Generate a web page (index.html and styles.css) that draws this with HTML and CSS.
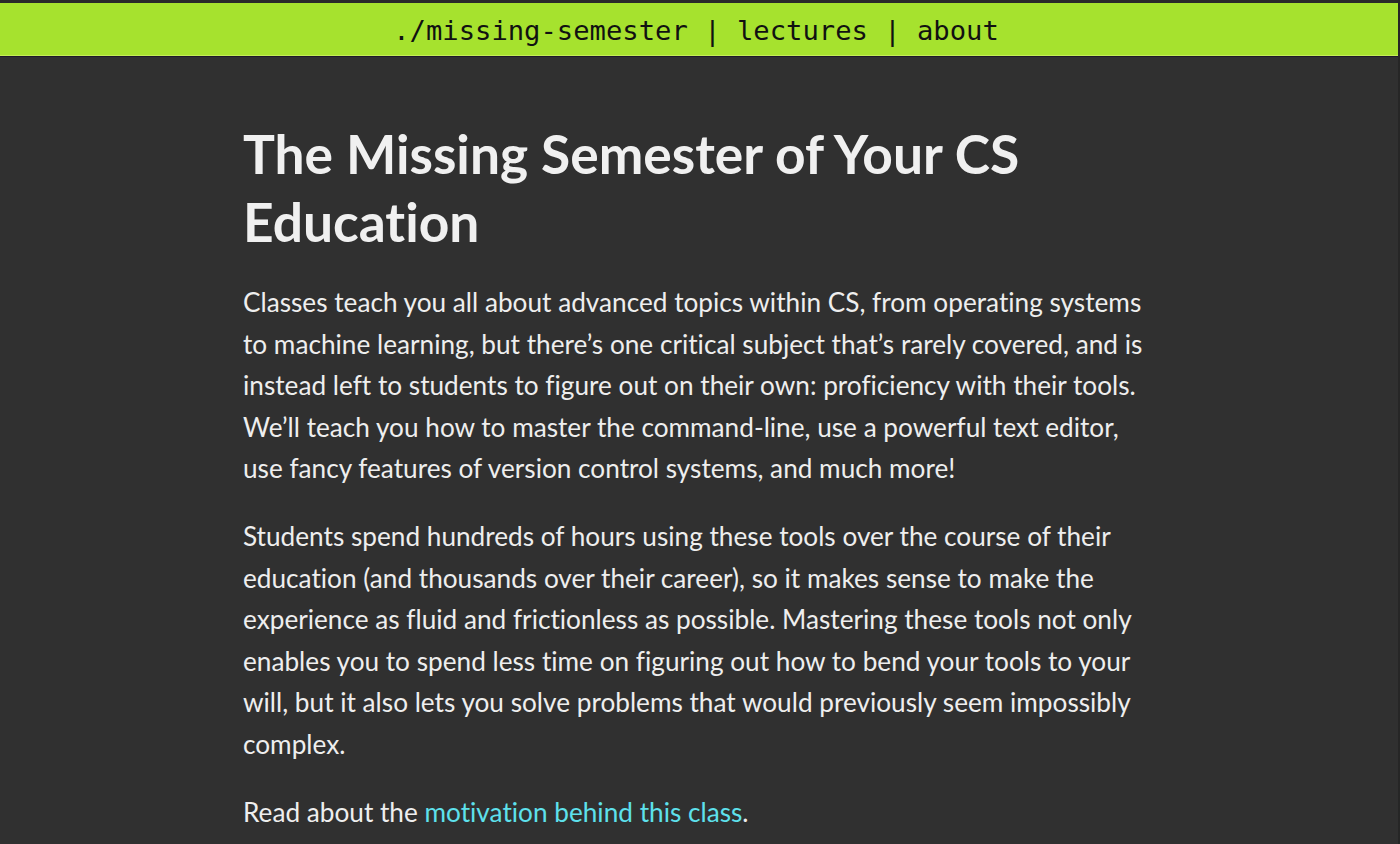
FILE: index.html
```html
<!DOCTYPE html>
<html lang="en">
<head>
<meta charset="utf-8">
<title>The Missing Semester of Your CS Education</title>
<link rel="stylesheet" href="styles.css">
</head>
<body>
<div class="topstrip"></div>
<header class="navbar">
  <nav class="nav"><a href="#" class="nav-link">./missing-semester</a> | <a href="#" class="nav-link">lectures</a> | <a href="#" class="nav-link">about</a></nav>
</header>
<main class="content">
  <h1 class="title">The Missing Semester of Your CS Education</h1>
  <p class="para">Classes teach you all about advanced topics within CS, from operating systems to machine learning, but there’s one critical subject that’s rarely covered, and is instead left to students to figure out on their own: proficiency with their tools. We’ll teach you how to master the command-line, use a powerful text editor, use fancy features of version control systems, and much more!</p>
  <p class="para">Students spend hundreds of hours using these tools over the course of their education (and thousands over their career), so it makes sense to make the experience as fluid and frictionless as possible. Mastering these tools not only enables you to spend less time on figuring out how to bend your tools to your will, but it also lets you solve problems that would previously seem impossibly complex.</p>
  <p class="para">Read about the <a href="#" class="link">motivation behind this class</a>.</p>
</main>
</body>
</html>
```
FILE: styles.css
```css
html, body {
  margin: 0;
  padding: 0;
}
body {
  background: #303030;
  color: #eeeeee;
  font-family: "Lato", "Noto Sans", sans-serif;
  font-variant-ligatures: none;
  overflow: hidden;
  height: 844px;
  border-right: 2px solid #262626;
  box-sizing: border-box;
}
.topstrip {
  height: 3px;
  background: #2a2a2a;
}
.navbar {
  background: #a6e22e;
  height: 52px;
  border-bottom: 1px solid #c4ee55;
  box-shadow: 0 1px 0 #1e1a2a;
  display: flex;
  justify-content: center;
  align-items: center;
}
.nav {
  font-family: "DejaVu Sans Mono", "Liberation Mono", monospace;
  font-size: 27.2px;
  color: #111;
  white-space: pre;
  padding-top: 2px;
  padding-right: 6px;
}
.nav-link {
  color: #111;
  text-decoration: none;
}
.content {
  width: 912px;
  margin: 0 auto;
  padding-top: 63px;
}
.title {
  font-size: 53.3px;
  font-weight: 700;
  line-height: 68px;
  margin: 0 0 27px 0;
  color: #f0f0f0;
}
.para {
  font-size: 26.2px;
  line-height: 41.6px;
  margin: 0 0 26px 0;
}
.link {
  color: #5ee1ec;
  text-decoration: none;
}
```
